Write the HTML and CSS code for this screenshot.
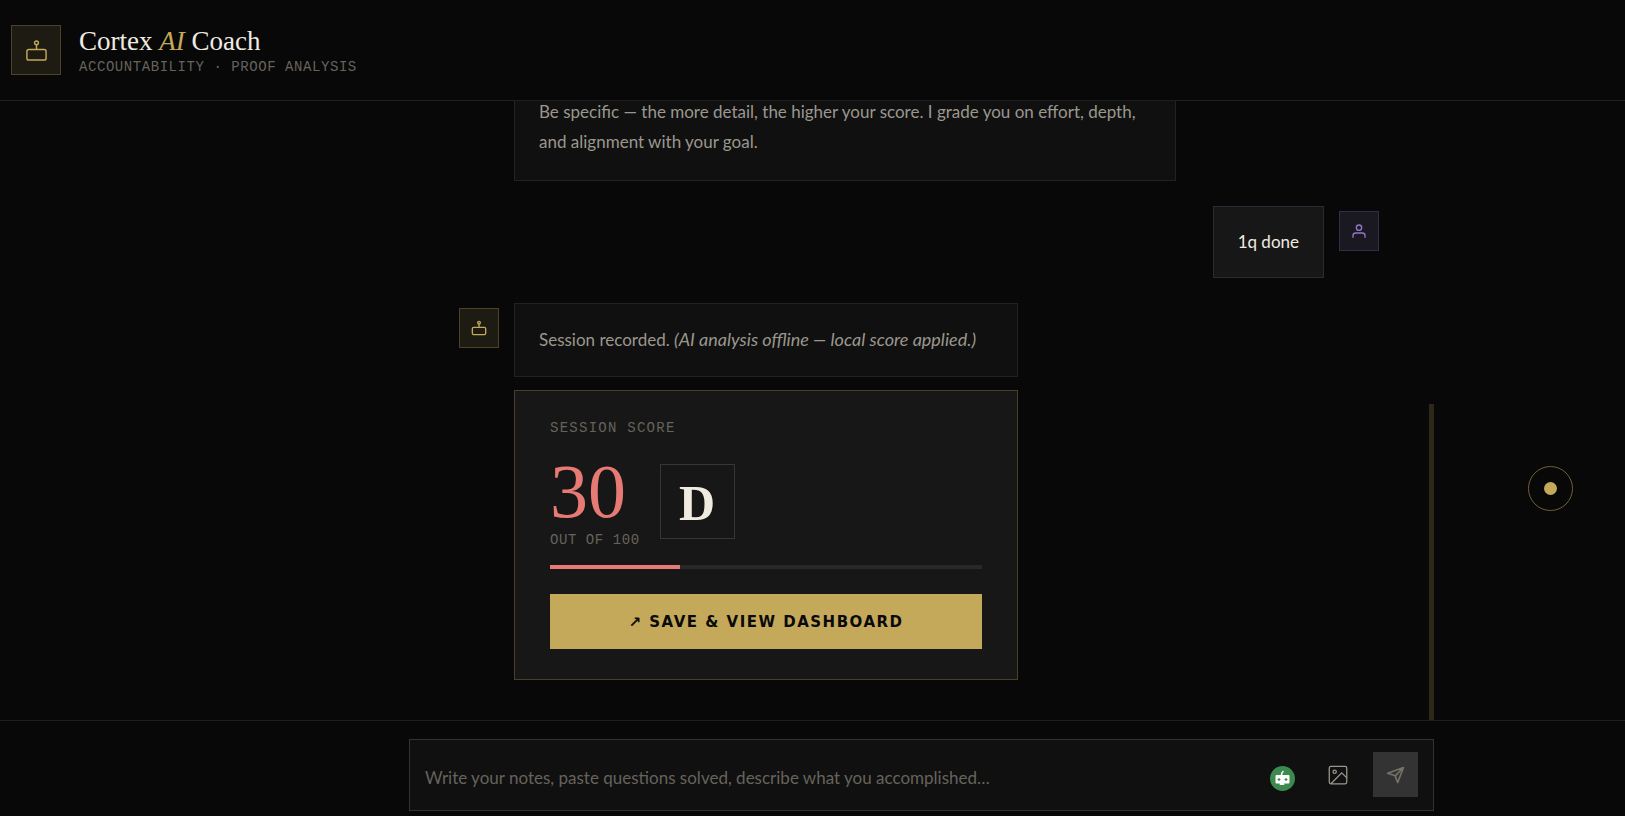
FILE: index.html
```html
<!DOCTYPE html>
<html lang="en">
<head>
    <meta charset="UTF-8">
    <meta name="viewport" content="width=device-width, initial-scale=1.0">
    <title>Cortex AI Coach</title>
    <link rel="stylesheet" href="styles.css">
</head>
<body>
    <header class="topbar">
        <div class="logo">
            <svg width="23" height="23" viewBox="0 0 24 24" fill="none" stroke="currentColor" stroke-width="1.5">
                <rect x="2" y="11" width="20" height="11" rx="2"/>
                <circle cx="12" cy="4" r="2"/>
                <path d="M12 6v5"/>
            </svg>
        </div>
        <div>
            <h1>Cortex <em>AI</em> Coach</h1>
            <p class="mono tagline">ACCOUNTABILITY · PROOF ANALYSIS</p>
        </div>
    </header>

    <main class="chat">
        <div class="messages">
            <div class="message intro">
                <div class="content">
                    <div class="bubble">Be specific — the more detail, the higher your score. I grade you on effort, depth, and alignment with your goal.</div>
                </div>
            </div>

            <div class="message user">
                <div class="avatar">
                    <svg width="16" height="16" viewBox="0 0 24 24" fill="none" stroke="currentColor" stroke-width="2">
                        <circle cx="12" cy="7" r="4"/>
                        <path d="M3 22v-3a4 4 0 0 1 4-4h10a4 4 0 0 1 4 4v3"/>
                    </svg>
                </div>
                <div class="content">
                    <div class="bubble">1q done</div>
                </div>
            </div>

            <div class="message">
                <div class="avatar">
                    <svg width="16" height="16" viewBox="0 0 24 24" fill="none" stroke="currentColor" stroke-width="2">
                        <rect x="2" y="11" width="20" height="11" rx="2"/>
                        <circle cx="12" cy="4" r="2"/>
                        <path d="M12 6v5"/>
                    </svg>
                </div>
                <div class="content scored">
                    <div class="bubble">Session recorded. <em>(AI analysis offline — local score applied.)</em></div>
                    <section class="score-card">
                        <h2 class="mono score-title">SESSION SCORE</h2>
                        <div class="score-row">
                            <div>
                                <div class="score-value">30</div>
                                <div class="mono">OUT OF 100</div>
                            </div>
                            <div class="grade">D</div>
                        </div>
                        <div class="bar"><div class="bar-fill" style="width: 30%"></div></div>
                        <button class="save-btn" type="button">↗ SAVE &amp; VIEW DASHBOARD</button>
                    </section>
                </div>
            </div>
        </div>
        <div class="scroll-thumb"></div>
    </main>

    <footer class="composer">
        <form class="input-box">
            <input type="text" id="notes" aria-label="Session notes" placeholder="Write your notes, paste questions solved, describe what you accomplished…">
            <svg class="helper" width="25" height="25" viewBox="0 0 25 25">
                <circle cx="12.5" cy="12.5" r="12.5" fill="#3d8a50"/>
                <path d="M11.500 9.500q0-3 2-4.500" fill="none" stroke="#fff" stroke-width="1.500"/>
                <rect x="5.500" y="9" width="14" height="8.500" rx="1" fill="#fff"/>
                <rect x="9.500" y="17" width="5" height="2" rx="1" fill="#fff"/>
                <path d="M9 12v3M7.500 13.500h3M16 12v3M14.500 13.500h3" stroke="#3d8a50" stroke-width="1.200"/>
            </svg>
            <button class="icon-btn" type="button" aria-label="Attach image">
                <svg width="20" height="20" viewBox="0 0 24 24" fill="none" stroke="currentColor" stroke-width="1.5">
                    <rect x="1.500" y="1.500" width="21" height="21" rx="2"/>
                    <circle cx="8" cy="8" r="2"/>
                    <path d="M22.500 15.500l-6-6L3.500 22.500"/>
                </svg>
            </button>
            <button class="icon-btn send" type="submit" aria-label="Send">
                <svg width="20" height="20" viewBox="0 0 24 24" fill="none" stroke="currentColor" stroke-width="2" stroke-linejoin="round">
                    <path d="M21 3L11 13M21 3l-7 18-3-8-9-3z"/>
                </svg>
            </button>
        </form>
    </footer>

    <div class="cursor-ring"><div class="cursor-dot"></div></div>
</body>
</html>
```
FILE: styles.css
```css
* {
    box-sizing: border-box;
    margin: 0;
    padding: 0;
}
body {
    height: 100vh;
    display: flex;
    flex-direction: column;
    overflow: hidden;
    background: #080808;
    color: #f0ebe0;
    font-family: Lato, sans-serif;
    font-size: 17px;
    line-height: 30px;
}
.topbar {
    display: flex;
    align-items: center;
    gap: 18px;
    padding: 25px 11px;
    border-bottom: 1px solid #1e1e1e;
}
.logo, .avatar {
    display: flex;
    align-items: center;
    justify-content: center;
    flex-shrink: 0;
    background: #1e1b12;
    border: 1px solid #4d4228;
    color: #c4a95a;
}
.logo {
    width: 50px;
    height: 50px;
}
h1 {
    margin-bottom: 3px;
    font-family: "Liberation Serif", serif;
    font-size: 27px;
    font-weight: 400;
    line-height: 30px;
}
h1 em {
    color: #c4a95a;
}
.mono {
    font-family: "Liberation Mono", monospace;
    font-size: 14px;
    font-weight: 400;
    line-height: 16px;
    letter-spacing: 0.04em;
    color: #66635c;
}

/* Chat */
.chat {
    flex: 1;
    min-height: 0;
    display: flex;
    position: relative;
    margin-left: 409px;
    margin-right: 191px;
}
.messages {
    flex: 1;
    display: flex;
    flex-direction: column;
    justify-content: flex-end;
    gap: 25px;
    padding: 0 55px 40px 50px;
    overflow: hidden;
}
.message {
    display: flex;
    align-items: flex-start;
    gap: 15px;
}
.user {
    flex-direction: row-reverse;
}
.avatar {
    width: 40px;
    height: 40px;
    margin-top: 5px;
}
.user .avatar {
    background: #1a1820;
    border-color: #332e48;
    color: #8f78c4;
}
.content {
    display: flex;
    flex-direction: column;
    gap: 13px;
    max-width: 72%;
}
.scored {
    min-width: 504px;
}
.bubble {
    padding: 20px 24px 21px;
    background: #101010;
    border: 1px solid #24221a;
    color: #9b978e;
}
.bubble em {
    font-size: 18px;
}
.intro {
    padding-left: 55px;
}
/* runs up under the top bar */
.intro .bubble {
    padding-top: 60px;
    padding-bottom: 23px;
}
.intro .content {
    max-width: 662px;
}
.user .bubble {
    padding-bottom: 20px;
    background: #171717;
    border-color: #2b2935;
    color: #f0ebe0;
}
.scroll-thumb {
    position: absolute;
    right: 0;
    bottom: 0;
    width: 5px;
    height: 51%;
    background: #2f2818;
}

/* Score card */
.score-card {
    padding: 29px 35px 30px;
    background: #171717;
    border: 1px solid #4a4028;
}
.score-title {
    margin-bottom: 18px;
    letter-spacing: 0.09em;
}
.score-row {
    display: flex;
    align-items: center;
    gap: 20px;
    margin-bottom: 17px;
}
.score-value {
    margin-bottom: 4px;
    font-family: "Liberation Serif", serif;
    font-size: 76px;
    line-height: 74px;
    color: #e87a76;
}
.grade {
    display: flex;
    align-items: center;
    justify-content: center;
    width: 75px;
    height: 75px;
    padding-top: 3px;
    border: 1px solid #363636;
    font-family: "Liberation Serif", serif;
    font-size: 50px;
    font-weight: 700;
}
.bar {
    height: 4px;
    margin-bottom: 25px;
    background: #282828;
}
.bar-fill {
    height: 100%;
    background: #e87a76;
}
.save-btn {
    width: 100%;
    height: 55px;
    border: none;
    background: #c4a95a;
    color: #0a0a0a;
    font-family: "DejaVu Sans", sans-serif;
    font-size: 15px;
    font-weight: 700;
    letter-spacing: 0.1em;
    cursor: pointer;
}

/* Composer */
.composer {
    padding: 18px 191px 5px 409px;
    border-top: 1px solid #1e1e1e;
}
.input-box {
    display: flex;
    align-items: center;
    gap: 13px;
    padding: 12px 15px 13px;
    background: #101010;
    border: 1px solid #333;
}
.input-box input {
    flex: 1;
    min-width: 0;
    height: 45px;
    padding-top: 6px;
    border: none;
    outline: none;
    background: none;
    color: #f0ebe0;
    font: inherit;
}
.input-box input::placeholder {
    color: #66635c;
    opacity: 1;
}
.helper {
    margin-top: 8px;
    margin-right: 7px;
}
.icon-btn {
    display: flex;
    align-items: center;
    justify-content: center;
    width: 45px;
    height: 45px;
    border: none;
    background: none;
    color: #9b978e;
    cursor: pointer;
}
.send {
    background: #333;
    color: #75726a;
}

.cursor-ring {
    position: fixed;
    right: 52px;
    top: 466px;
    display: flex;
    align-items: center;
    justify-content: center;
    width: 45px;
    height: 45px;
    border: 1px solid #6e6038;
    border-radius: 50%;
}
.cursor-dot {
    width: 13px;
    height: 13px;
    border-radius: 50%;
    background: #c4a95a;
}
```
